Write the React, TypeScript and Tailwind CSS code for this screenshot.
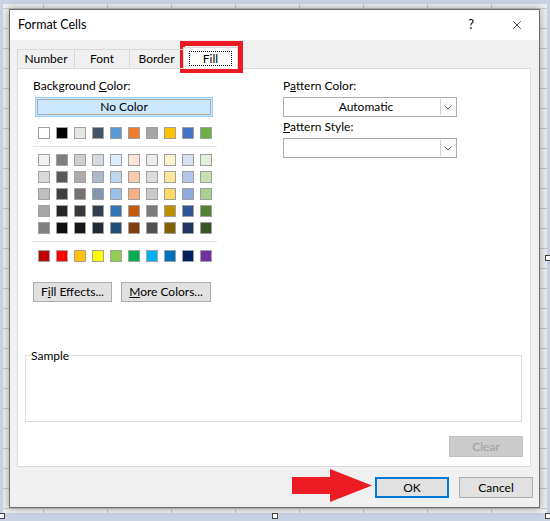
import { X } from 'lucide-react'

const THEME = ['#FFFFFF', '#000000', '#E7E6E6', '#44546A', '#5B9BD5', '#ED7D31', '#A5A5A5', '#FFC000', '#4472C4', '#70AD47']

const TINTS = [
  ['#F2F2F2', '#808080', '#D0CECE', '#D6DCE4', '#DDEBF7', '#FCE4D6', '#EDEDED', '#FFF2CC', '#D9E1F2', '#E2EFDA'],
  ['#D9D9D9', '#595959', '#AEAAAA', '#ADB9CA', '#BDD7EE', '#F8CBAD', '#DBDBDB', '#FFE699', '#B4C6E7', '#C6E0B4'],
  ['#BFBFBF', '#404040', '#757171', '#8497B0', '#9BC2E6', '#F4B084', '#C9C9C9', '#FFD966', '#8EA9DB', '#A9D08E'],
  ['#A6A6A6', '#262626', '#3B3838', '#333F4F', '#2F75B5', '#C65911', '#7B7B7B', '#BF8F00', '#305496', '#548235'],
  ['#808080', '#0D0D0D', '#171616', '#222B35', '#1F4E78', '#833C0C', '#525252', '#806000', '#203764', '#375623'],
]

const STANDARD = ['#C00000', '#FF0000', '#FFC000', '#FFFF00', '#92D050', '#00B050', '#00B0F0', '#0070C0', '#002060', '#7030A0']

const COLS = [43, 107, 171, 235, 299, 363, 427, 491]
const ROWS = Array.from({ length: 26 }, (_, i) => 8 + i * 20)

function SwatchRow({ colors }: { colors: string[] }) {
  return (
    <div className="flex gap-[6px] pl-[5px]">
      {colors.map((c, i) => (
        <div key={`${c}-${i}`} className="h-[12px] w-[12px] border border-[#a0a0a0]" style={{ backgroundColor: c }} />
      ))}
    </div>
  )
}

function Chevron() {
  return (
    <svg width="8" height="5" viewBox="0 0 8 5" aria-hidden="true">
      <polyline points="0.5,0.5 4,4 7.5,0.5" fill="none" stroke="#606060" strokeWidth="1" />
    </svg>
  )
}

function Dropdown({ value }: { value?: string }) {
  return (
    <div className="flex h-[20px] w-[174px] border border-[#acacac] bg-white">
      <div className="flex flex-1 items-center justify-center pl-[8px]">{value}</div>
      <div className="my-px mr-px flex w-[15px] items-center justify-center border-l border-[#d2d2d2] bg-[#fafafa]">
        <Chevron />
      </div>
    </div>
  )
}

function Handle({ className }: { className: string }) {
  return <div className={`absolute h-[6px] w-[6px] border border-[#404040] bg-white ${className}`} />
}

export default function App() {
  return (
    <div className="relative h-[521px] w-[550px] overflow-hidden bg-[#c9d2e3] font-['Lato','Liberation_Sans',sans-serif] text-[12px] text-black">
      {/* sheet behind the dialog */}
      <div className="absolute left-[3px] top-[4px] h-[509px] w-[544px] bg-[#eeeeee]">
        {COLS.map(x => (
          <div key={x} className="absolute top-0 h-full w-px bg-[#c8c8c8]" style={{ left: x - 3 }} />
        ))}
        {ROWS.map(y => (
          <div key={y} className="absolute left-0 h-px w-full bg-[#c8c8c8]" style={{ top: y - 4 }} />
        ))}
      </div>

      {/* dialog */}
      <div className="absolute left-[9px] top-[9px] flex h-[499px] w-[531px] flex-col border border-[#6d6d6d] bg-[#f0f0f0] shadow-[0_0_8px_rgba(0,0,0,0.35)]">
        {/* title bar */}
        <div className="flex h-[30px] flex-none items-center bg-white pl-[8px]">
          <span className="text-[12.5px]">Format Cells</span>
          <span className="ml-auto mr-[36px] text-[13px]">?</span>
          <X aria-hidden="true" strokeWidth={1.2} className="mr-[15px] h-[14px] w-[14px]" />
        </div>

        <div className="flex flex-1 flex-col px-[7px] pt-[9px]">
          {/* tabs */}
          <div className="relative z-10 -mb-px flex h-[20px] items-end">
            <div className="flex h-[20px] w-[58px] items-center justify-center border border-[#d9d9d9]">Number</div>
            <div className="-ml-px flex h-[20px] w-[56px] items-center justify-center border border-[#d9d9d9]">Font</div>
            <div className="-ml-px flex h-[20px] w-[55px] items-center justify-center border border-[#d9d9d9]">Border</div>
            <div className="-ml-px flex h-[22px] w-[55px] items-center justify-center border border-b-0 border-[#d9d9d9] bg-white">
              <span className="border border-dotted border-black px-[13px] leading-[13px]">Fill</span>
            </div>
          </div>

          {/* panel */}
          <div className="flex h-[399px] w-[514px] flex-col border border-[#d9d9d9] bg-white">
            <div className="ml-[15px] mt-[9px] flex">
              <div className="w-[184px]">
                <div className="h-[15px] leading-[15px]">
                  Background <span className="underline">C</span>olor:
                </div>
                <div className="ml-[2px] mt-[4px] h-[20px] w-[178px] border border-[#99d1ff] bg-[#cce8ff] p-px">
                  <div className="flex h-full items-center justify-center border border-[#a8a8a8]">No Color</div>
                </div>
                <div className="mt-[10px]">
                  <SwatchRow colors={THEME} />
                </div>
                <div className="mt-[7px] h-px bg-[#e3e3e3]" />
                <div className="mt-[7px] flex flex-col gap-[5px]">
                  {TINTS.map((row, i) => (
                    <SwatchRow key={i} colors={row} />
                  ))}
                </div>
                <div className="mt-[7px] h-px bg-[#e3e3e3]" />
                <div className="mt-[8px]">
                  <SwatchRow colors={STANDARD} />
                </div>
                <div className="mt-[20px] flex gap-[9px]">
                  <div className="flex h-[20px] w-[79px] items-center justify-center border border-[#adadad] bg-[#e1e1e1]">
                    <span>
                      F<span className="underline">i</span>ll Effects...
                    </span>
                  </div>
                  <div className="flex h-[20px] w-[90px] items-center justify-center border border-[#adadad] bg-[#e1e1e1]">
                    <span>
                      <span className="underline">M</span>ore Colors...
                    </span>
                  </div>
                </div>
              </div>

              <div className="ml-[66px] w-[174px]">
                <div className="h-[15px] leading-[15px]">
                  P<span className="underline">a</span>ttern Color:
                </div>
                <div className="mt-[4px]">
                  <Dropdown value="Automatic" />
                </div>
                <div className="mt-[2px] h-[15px] leading-[15px]">
                  <span className="underline">P</span>attern Style:
                </div>
                <div className="mt-[4px]">
                  <Dropdown />
                </div>
              </div>
            </div>

            {/* sample */}
            <div className="relative ml-[7px] mt-[53px] h-[67px] w-[497px] border border-[#dcdcdc]">
              <span className="absolute left-[5px] top-[-8px] bg-white leading-[15px]">Sample</span>
            </div>

            <div className="mt-[14px] flex justify-end pr-[7px]">
              <div className="flex h-[21px] w-[74px] items-center justify-center border border-[#bfbfbf] bg-[#cccccc] text-[#a0a0a0]">
                Clear
              </div>
            </div>
          </div>

          {/* footer buttons */}
          <div className="mt-[10px] flex justify-end gap-[10px]">
            <div className="flex h-[21px] w-[74px] items-center justify-center border-2 border-[#0078d7] bg-[#e1e1e1]">OK</div>
            <div className="mr-[-1px] flex h-[21px] w-[74px] items-center justify-center border border-[#adadad] bg-[#e1e1e1]">
              Cancel
            </div>
          </div>
        </div>
      </div>

      {/* red highlight on the Fill tab */}
      <div className="absolute left-[180px] top-[41px] h-[32px] w-[63px] border-[5px] border-[#ed1c24]" />

      {/* red arrow pointing at OK */}
      <svg className="absolute left-[292px] top-[469px]" width="81" height="34" viewBox="0 0 81 34" aria-hidden="true">
        <polygon points="0,8 38,8 38,0 80,16.5 38,33 38,25 0,25" fill="#ed1c24" />
      </svg>

      <Handle className="left-[-1px] top-[513px]" />
      <Handle className="left-[272px] top-[513px]" />
      <Handle className="left-[545px] top-[513px]" />
      <Handle className="left-[545px] top-[255px]" />
    </div>
  )
}
